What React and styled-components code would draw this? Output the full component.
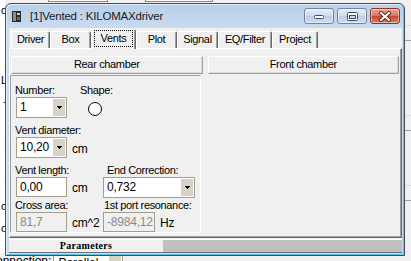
import React from 'react';
import styled, { createGlobalStyle } from 'styled-components';

const GlobalStyle = createGlobalStyle`
  html, body { margin: 0; padding: 0; background: #f0f0f0; }
  body {
    font-family: "Liberation Sans", Arial, sans-serif;
    font-size: 11px;
    color: #000;
  }
`;

const Desktop = styled.div`
  position: relative;
  width: 411px;
  height: 261px;
  overflow: hidden;
  background: #f0f0f0;
`;

/* fragments of the application window lying behind the dialog */
const BackStrip = styled.div`
  position: absolute;
  left: 0;
  top: 0;
  width: 5px;
  height: 253px;
  overflow: hidden;
  background: #fff;
`;

const BackGlyph = styled.span`
  position: absolute;
  right: -2px;
  top: ${p => p.$y}px;
  font-size: 11px;
  line-height: 13px;
`;

const BackLine = styled.div`
  position: absolute;
  left: ${p => p.$x}px;
  top: ${p => p.$y}px;
  width: ${p => p.$w}px;
  height: 1px;
  background: ${p => p.$c};
`;

const BackBox = styled.div`
  position: absolute;
  left: ${p => p.$x}px;
  top: -2px;
  width: ${p => p.$w}px;
  height: 4px;
  box-sizing: border-box;
  border: 1px solid #8a8a8a;
  background: #fff;
`;

const BackRow = styled.div`
  position: absolute;
  left: -4px;
  top: 254px;
  display: flex;
  align-items: flex-start;
  gap: 2px;
  font-size: 12px;
  line-height: 14px;
`;

const BackCombo = styled.div`
  width: 70px;
  height: 18px;
  box-sizing: border-box;
  border: 1px solid #a59d8b;
  background: #fff;
  display: flex;
  padding: 1px;
  span { flex: 1; padding-left: 3px; }
  i { width: 12px; background: #d6d2c6; }
`;

const Window = styled.div`
  position: absolute;
  left: 5px;
  top: 3px;
  width: 400px;
  height: 253px;
  box-sizing: border-box;
  border: 1px solid #3d4e60;
  border-radius: 6px 6px 0 0;
  background: linear-gradient(#b7cfea, #c8dbf0 24px, #c6daef);
  box-shadow: inset 1px 1px 0 #e4eefa, inset -1px -1px 0 #5cc6ea;
  padding: 0 2px 2px 3px;
  display: flex;
  flex-direction: column;
`;

const TitleBar = styled.div`
  height: 24px;
  display: flex;
  align-items: center;
  flex-shrink: 0;
`;

const AppIcon = styled.svg`
  margin-left: 3px;
  margin-right: 9px;
`;

const Caption = styled.span`
  font-size: 11.5px;
  letter-spacing: -0.2px;
  color: #1b1b1b;
`;

const CaptionButtons = styled.div`
  margin-left: auto;
  margin-right: 2px;
  align-self: flex-start;
  margin-top: 4px;
  display: flex;
  gap: 3px;
`;

const CapButton = styled.div`
  width: 30px;
  height: 16px;
  box-sizing: border-box;
  border-radius: 3px;
  border: 1px solid ${p => (p.$close ? '#8a3526' : '#6f84a3')};
  background: ${p =>
    p.$close
      ? 'linear-gradient(#e8a593, #d7745f 50%, #c5472f 51%, #d5826a)'
      : 'linear-gradient(#e3edf8, #cbdbee 50%, #b9cde6 51%, #cddff2)'};
  box-shadow: inset 0 0 0 1px rgba(255, 255, 255, 0.45);
  display: flex;
  align-items: center;
  justify-content: center;
`;

const Client = styled.div`
  flex: 1;
  background: #f0f0f0;
  display: flex;
  flex-direction: column;
`;

const TabStrip = styled.div`
  height: 20px;
  display: flex;
  align-items: flex-end;
  padding-left: 2px;
  flex-shrink: 0;
`;

const Tab = styled.div`
  position: relative;
  width: ${p => p.$w}px;
  height: ${p => (p.$active ? 20 : 17)}px;
  box-sizing: border-box;
  border-top: 1px solid #fff;
  border-left: 1px solid #fff;
  border-right: 1px solid #696969;
  border-radius: 2px 2px 0 0;
  box-shadow: inset -1px 0 0 #a0a0a0;
  background: #f0f0f0;
  text-align: center;
  line-height: 15px;
  letter-spacing: -0.35px;
  margin-bottom: ${p => (p.$active ? -1 : 0)}px;
  z-index: ${p => (p.$active ? 1 : 0)};
  padding: ${p => (p.$active ? '0 2px 2px 2px' : '0')};
  display: flex;
`;

const FocusBox = styled.span`
  flex: 1;
  outline: 1px dotted #000;
  outline-offset: -1px;
  line-height: 14px;
  padding-top: 1px;
`;

const TabLabel = styled.span`
  flex: 1;
`;

const Panel = styled.div`
  height: 190px;
  box-sizing: border-box;
  border-top: 1px solid #fff;
  border-left: 1px solid #fff;
  border-right: 1px solid #696969;
  border-bottom: 1px solid #696969;
  box-shadow: inset -1px -1px 0 #a0a0a0;
  padding: 7px 2px 0 1px;
  display: flex;
  flex-direction: column;
  flex-shrink: 0;
`;

const ChamberRow = styled.div`
  display: flex;
  gap: 5px;
`;

const ChamberButton = styled.div`
  flex: 1;
  height: 18px;
  box-sizing: border-box;
  border: 1px solid;
  border-color: #fff #a0a0a0 #a0a0a0 #fff;
  box-shadow: inset -1px -1px 0 #dadada;
  text-align: center;
  line-height: 15px;
  letter-spacing: -0.35px;
`;

const Group = styled.div`
  width: 191px;
  height: 158px;
  margin: 1px 0 0 -1px;
  box-sizing: border-box;
  border: 1px solid;
  border-color: #a0a0a0 #fff #fff #a0a0a0;
  padding: 8px 0 0 5px;
  display: flex;
  flex-direction: column;
`;

const Row = styled.div`
  display: flex;
  align-items: flex-start;
  margin-top: ${p => p.$mt || 0}px;
`;

const Field = styled.div`
  display: flex;
  flex-direction: column;
  width: ${p => (p.$w ? `${p.$w}px` : 'auto')};
`;

const Label = styled.div`
  height: 13px;
  line-height: 13px;
  margin-left: ${p => (p.$ml ?? -1)}px;
  letter-spacing: -0.35px;
  white-space: nowrap;
`;

const Control = styled.div`
  display: flex;
  align-items: center;
  gap: 5px;
`;

const Combo = styled.div`
  width: ${p => p.$w}px;
  height: 21px;
  box-sizing: border-box;
  border: 1px solid #a59d8b;
  background: #fff;
  padding: 1px;
  display: flex;
`;

const ComboText = styled.span`
  flex: 1;
  padding-left: 2px;
  font-size: 12px;
  line-height: 17px;
  letter-spacing: -0.2px;
`;

const DropButton = styled.span`
  width: 12px;
  background: #d6d2c6;
  display: flex;
  align-items: center;
  justify-content: center;
`;

const Edit = styled.div`
  width: ${p => p.$w}px;
  height: 20px;
  box-sizing: border-box;
  border: 1px solid #a59d8b;
  background: ${p => (p.$disabled ? '#f0f0f0' : '#fff')};
  color: ${p => (p.$disabled ? '#8a8a8a' : '#000')};
  padding-left: 3px;
  font-size: 12px;
  line-height: 18px;
  letter-spacing: -0.2px;
`;

const Unit = styled.span`
  letter-spacing: -0.2px;
  font-size: 12px;
  padding-top: 2px;
`;

const Shape = styled.div`
  width: 14px;
  height: 14px;
  margin: 5px 0 0 8px;
  box-sizing: border-box;
  border: 1px solid #000;
  border-radius: 50%;
  background: #fff;
`;

const SheetStrip = styled.div`
  margin-top: 1px;
  height: 14px;
  display: flex;
  border-top: 1px solid #fff;
  border-bottom: 1px solid #6f6f6f;
  box-sizing: border-box;
`;

const SheetTab = styled.div`
  width: 154px;
  background: #f0f0f0;
  text-align: center;
  font-family: "Liberation Serif", "Times New Roman", serif;
  font-weight: bold;
  font-size: 10px;
  line-height: 12px;
  letter-spacing: 0.3px;
`;

const SheetRest = styled.div`
  flex: 1;
  background: #c0c0c0;
`;

const Arrow = () => (
  <svg width="5" height="3" viewBox="0 0 5 3">
    <path d="M0 0h5v1h-1v1h-1v1h-1v-1h-1v-1h-1z" fill="#000" />
  </svg>
);

const ComboBox = ({ w, value }) => (
  <Combo $w={w}>
    <ComboText>{value}</ComboText>
    <DropButton><Arrow /></DropButton>
  </Combo>
);

const tabs = [
  { name: 'Driver', w: 39 },
  { name: 'Box', w: 41 },
  { name: 'Vents', w: 45, active: true },
  { name: 'Plot', w: 41 },
  { name: 'Signal', w: 41 },
  { name: 'EQ/Filter', w: 54 },
  { name: 'Project', w: 46 },
];

export default function App() {
  return (
    <>
      <GlobalStyle />
      <Desktop>
        <BackStrip>
          <BackGlyph $y={4}>d</BackGlyph>
          <BackGlyph $y={60}>l</BackGlyph>
          <BackGlyph $y={74}>L</BackGlyph>
          <BackGlyph $y={95}>-</BackGlyph>
          <BackGlyph $y={138}>l</BackGlyph>
          <BackGlyph $y={176}>i</BackGlyph>
          <BackGlyph $y={200}>o</BackGlyph>
          <BackGlyph $y={222}>o</BackGlyph>
        </BackStrip>
        <BackBox $x={48} $w={60} />
        <BackBox $x={145} $w={68} />
        <BackLine $x={405} $y={25} $w={6} $c="#dcdcdc" />
        <BackLine $x={405} $y={40} $w={6} $c="#a0a0a0" />
        <BackLine $x={405} $y={115} $w={6} $c="#dcdcdc" />
        <BackLine $x={405} $y={130} $w={6} $c="#a0a0a0" />
        <BackLine $x={405} $y={185} $w={6} $c="#dcdcdc" />
        <BackLine $x={405} $y={200} $w={6} $c="#a0a0a0" />
        <BackRow>
          <span>onnection:</span>
          <BackCombo><span>Parallel</span><i /></BackCombo>
        </BackRow>

        <Window>
          <TitleBar>
            <AppIcon width="9" height="11" viewBox="0 0 9 11">
              <rect x="0" y="0" width="9" height="11" fill="#2a2a2a" />
              <rect x="1" y="1" width="3" height="9" fill="#8c8c8c" />
              <rect x="5" y="2" width="3" height="2" fill="#d0d0d0" />
              <rect x="5" y="6" width="3" height="3" fill="#6a6a6a" />
            </AppIcon>
            <Caption>[1]Vented : KILOMAXdriver</Caption>
            <CaptionButtons>
              <CapButton>
                <svg width="12" height="6" viewBox="0 0 12 6">
                  <rect x="1.5" y="2.5" width="9" height="3" rx="1" fill="#fff" stroke="#3b4c63" />
                </svg>
              </CapButton>
              <CapButton>
                <svg width="11" height="9" viewBox="0 0 11 9">
                  <rect x="0.5" y="0.5" width="10" height="8" rx="1" fill="#fff" stroke="#3b4c63" />
                  <rect x="2.5" y="3.5" width="6" height="3" fill="#c9d8ea" stroke="#3b4c63" />
                </svg>
              </CapButton>
              <CapButton $close>
                <svg width="14" height="11" viewBox="0 0 14 11">
                  <path d="M3 2l8 7M11 2l-8 7" stroke="#5a2418" strokeWidth="4" strokeLinecap="round" />
                  <path d="M3 2l8 7M11 2l-8 7" stroke="#fff" strokeWidth="2.2" strokeLinecap="round" />
                </svg>
              </CapButton>
            </CaptionButtons>
          </TitleBar>

          <Client>
            <TabStrip>
              {tabs.map(t => (
                <Tab key={t.name} $w={t.w} $active={t.active}>
                  {t.active ? <FocusBox>{t.name}</FocusBox> : <TabLabel>{t.name}</TabLabel>}
                </Tab>
              ))}
            </TabStrip>

            <Panel>
              <ChamberRow>
                <ChamberButton>Rear chamber</ChamberButton>
                <ChamberButton>Front chamber</ChamberButton>
              </ChamberRow>

              <Group>
                <Row>
                  <Field $w={64}>
                    <Label>Number:</Label>
                    <ComboBox w={51} value="1" />
                  </Field>
                  <Field>
                    <Label $ml={0}>Shape:</Label>
                    <Shape />
                  </Field>
                </Row>

                <Row $mt={6}>
                  <Field>
                    <Label>Vent diameter:</Label>
                    <Control>
                      <ComboBox w={51} value="10,20" />
                      <Unit>cm</Unit>
                    </Control>
                  </Field>
                </Row>

                <Row $mt={6}>
                  <Field $w={87}>
                    <Label>Vent length:</Label>
                    <Control>
                      <Edit $w={51}>0,00</Edit>
                      <Unit>cm</Unit>
                    </Control>
                  </Field>
                  <Field>
                    <Label $ml={4}>End Correction:</Label>
                    <ComboBox w={92} value="0,732" />
                  </Field>
                </Row>

                <Row $mt={1}>
                  <Field $w={87}>
                    <Label>Cross area:</Label>
                    <Control>
                      <Edit $w={51} $disabled>81,7</Edit>
                      <Unit>cm^2</Unit>
                    </Control>
                  </Field>
                  <Field>
                    <Label $ml={1}>1st port resonance:</Label>
                    <Control>
                      <Edit $w={52} $disabled>-8984,12</Edit>
                      <Unit>Hz</Unit>
                    </Control>
                  </Field>
                </Row>
              </Group>
            </Panel>

            <SheetStrip>
              <SheetTab>Parameters</SheetTab>
              <SheetRest />
            </SheetStrip>
          </Client>
        </Window>
      </Desktop>
    </>
  );
}
